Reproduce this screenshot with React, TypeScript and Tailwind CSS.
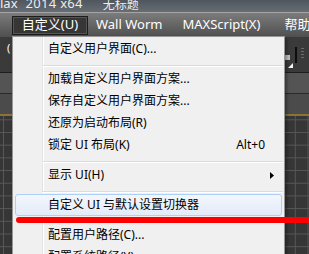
import React from "react";

type Entry =
  | { kind: "sep" }
  | { kind: "item"; label: string; shortcut?: string; submenu?: boolean; active?: boolean };

const entries: Entry[] = [
  { kind: "item", label: "自定义用户界面(C)..." },
  { kind: "sep" },
  { kind: "item", label: "加载自定义用户界面方案..." },
  { kind: "item", label: "保存自定义用户界面方案..." },
  { kind: "item", label: "还原为启动布局(R)" },
  { kind: "item", label: "锁定 UI 布局(K)", shortcut: "Alt+0" },
  { kind: "sep" },
  { kind: "item", label: "显示 UI(H)", submenu: true },
  { kind: "sep" },
  { kind: "item", label: "自定义 UI 与默认设置切换器", active: true },
  { kind: "sep" },
  { kind: "item", label: "配置用户路径(C)..." },
  { kind: "item", label: "配置系统路径(Y)..." },
];

function MenuRow({ entry }: { entry: Entry }) {
  if (entry.kind === "sep") {
    return (
      <div className="h-[8px] pt-[5px] ml-[29px] mr-[1px] shrink-0">
        <div className="h-[1px] bg-[#dcdcdc]" />
        <div className="h-[1px] bg-white" />
      </div>
    );
  }
  return (
    <div
      className={
        "mx-[2px] h-[22px] shrink-0 flex items-center rounded-[3px] border pl-[32px] " +
        (entry.submenu ? "pr-[7px] " : "pr-[16px] ") +
        (entry.active
          ? "border-[#aecff7] bg-gradient-to-b from-[#f3f7fd] to-[#e3ebf8]"
          : "border-transparent")
      }
    >
      <span className="whitespace-pre">{entry.label}</span>
      {entry.shortcut && <span className="ml-auto">{entry.shortcut}</span>}
      {entry.submenu && (
        <svg className="ml-auto" width="4" height="7" viewBox="0 0 4 7">
          <polygon points="0,0 4,3.5 0,7" fill="#000" />
        </svg>
      )}
    </div>
  );
}

export default function App() {
  return (
    <div className="relative w-[309px] h-[254px] overflow-hidden bg-[#383838] font-['Noto_Sans','Noto_Sans_CJK_SC',sans-serif]">
      {/* title bar, text cut at the top */}
      <div className="h-[12px] overflow-hidden bg-gradient-to-b from-[#4f565e] to-[#676d73] text-[13px] text-[#ededed]">
        <div className="-mt-[5px] h-[17px] leading-[17px] flex whitespace-pre">
          <span className="shrink-0">lax</span>
          <span className="shrink-0 ml-[8px] tracking-[0.3px]">2014 x64</span>
          <span className="shrink-0 ml-[20px] text-[12px] font-['Noto_Sans_CJK_SC',sans-serif]">无标题</span>
        </div>
      </div>

      {/* menu bar */}
      <div className="h-[25px] overflow-hidden border-t border-[#a4a4a4] bg-gradient-to-b from-[#7c7c7c] to-[#4f4f4f] flex items-center text-[13px] text-white whitespace-pre">
        <div className="shrink-0 ml-[12px] w-[76px] h-[19px] flex items-center justify-center border border-[#1c1c1c] bg-[#363636] shadow-[inset_0_0_0_1px_#555]">
          自定义(U)
        </div>
        <span className="shrink-0 ml-[8px]">Wall Worm</span>
        <span className="shrink-0 ml-[20px]">MAXScript(X)</span>
        <span className="shrink-0 ml-[24px]">帮助(H)</span>
      </div>

      {/* workspace behind the menu */}
      <div className="flex flex-col h-[217px]">
        <div className="h-[36px] shrink-0 bg-[#3a3a3a] border-b border-[#1e1e1e] flex">
          <span className="ml-[7px] mt-[4px] text-[11px] text-white leading-[14px]">(</span>
          <div className="ml-[274px] mt-[18px] flex flex-col">
            <div className="w-[6px] h-[5px] bg-[#b9c3cc]" />
            <svg className="ml-[4px] mt-[3px]" width="5" height="5" viewBox="0 0 5 5">
              <path d="M0 5 L5 0 L5 5 Z" fill="#f4f4f4" />
            </svg>
          </div>
          <div className="ml-[2px] mt-[10px] w-[2px] h-[16px] bg-[#0d0d0d]" />
          <div className="ml-[4px] mt-[11px] w-[3px] h-[12px] bg-[repeating-linear-gradient(to_bottom,#6a6a6a_0px,#6a6a6a_1px,transparent_1px,transparent_3px)]" />
        </div>
        <div className="h-[21px] shrink-0 bg-[#545454] border-b border-[#2a2a2a]" />
        <div className="h-[20px] shrink-0 bg-[#4b4b4b]" />
        <div className="h-[2px] shrink-0 bg-[#8b7333]" />
        <div className="flex-1 bg-[#363636] bg-[linear-gradient(to_right,#575757_1px,transparent_1px),linear-gradient(to_bottom,#575757_1px,transparent_1px)] bg-[size:12.7px_12.7px] bg-[position:3px_3.3px]" />
      </div>

      {/* dropdown menu */}
      <div className="absolute left-[12px] top-[36px] w-[273px] h-[240px] border border-[#979797] pt-[1px] flex flex-col text-[12px] text-black shadow-[2px_2px_3px_rgba(0,0,0,0.35)] bg-[linear-gradient(to_right,#f0f0f0_29px,#e2e3e3_29px,#e2e3e3_30px,#ffffff_30px,#ffffff_31px,#f0f0f0_31px)]">
        {entries.map((e, i) => (
          <MenuRow key={i} entry={e} />
        ))}
      </div>

      {/* red annotation stroke */}
      <div className="absolute left-[16px] top-[217px] w-[300px] h-[6px] rounded-l-full bg-[#ff0000]" />
    </div>
  );
}
